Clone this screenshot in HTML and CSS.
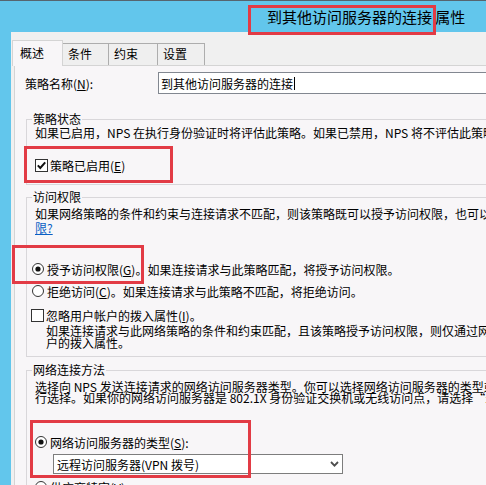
FILE: index.html
```html
<!DOCTYPE html>
<html lang="zh-CN">
<head>
<meta charset="utf-8">
<title>到其他访问服务器的连接 属性</title>
<link rel="stylesheet" href="styles.css">
</head>
<body>
<div class="window">
  <div class="titlebar">到其他访问服务器的连接 属性</div>
  <div class="client">
    <div class="tabs">
      <div class="tab active">概述</div>
      <div class="tab t2">条件</div>
      <div class="tab t3">约束</div>
      <div class="tab t4">设置</div>
    </div>
    <div class="panel">
      <div class="name-row">
        <span class="name-label">策略名称(<u>N</u>):</span>
        <div class="textbox">到其他访问服务器的连接<span class="caret"></span></div>
      </div>

      <fieldset class="group g1">
        <legend>策略状态</legend>
        <div class="desc">如果已启用，NPS 在执行身份验证时将评估此策略。如果已禁用，NPS 将不评估此策略。</div>
        <div class="opt opt-g1">
          <svg class="box" width="13" height="13" viewBox="0 0 13 13"><rect x="0.5" y="0.5" width="12" height="12" fill="#fff" stroke="#333"/><path d="M2.8 6.4 L5.3 9 L10.2 3.4" fill="none" stroke="#111" stroke-width="2"/></svg>
          <span>策略已启用(<u>E</u>)</span>
        </div>
      </fieldset>

      <fieldset class="group g2">
        <legend>访问权限</legend>
        <div class="desc d-first">如果网络策略的条件和约束与连接请求不匹配，则该策略既可以授予访问权限，也可以拒绝访问权限。授予或拒绝访问权</div>
        <div class="desc"><span class="link">限?</span></div>
        <div class="opt opt-radio r1">
          <svg class="radio" width="12" height="12" viewBox="0 0 12 12"><circle cx="6" cy="6" r="5.5" fill="#fff" stroke="#333"/><circle cx="6" cy="6" r="2.6" fill="#111"/></svg>
          <span>授予访问权限(<u>G</u>)。如果连接请求与此策略匹配，将授予访问权限。</span>
        </div>
        <div class="opt opt-radio r2">
          <svg class="radio" width="12" height="12" viewBox="0 0 12 12"><circle cx="6" cy="6" r="5.5" fill="#fff" stroke="#333"/></svg>
          <span>拒绝访问(<u>C</u>)。如果连接请求与此策略不匹配，将拒绝访问。</span>
        </div>
        <div class="opt opt-check c3">
          <svg class="box" width="13" height="13" viewBox="0 0 13 13"><rect x="0.5" y="0.5" width="12" height="12" fill="#fff" stroke="#333"/></svg>
          <span>忽略用户帐户的拨入属性(<u>I</u>)。</span>
        </div>
        <div class="sub">
          <div>如果连接请求与此网络策略的条件和约束匹配，且该策略授予访问权限，则仅通过网络策略评估授权，而不考虑用</div>
          <div>户的拨入属性。</div>
        </div>
      </fieldset>

      <fieldset class="group g3">
        <legend>网络连接方法</legend>
        <div class="tight">
          <div>选择向 NPS 发送连接请求的网络访问服务器类型。你可以选择网络访问服务器的类型或供应商特定类型进</div>
          <div>行选择。如果你的网络访问服务器是 802.1X 身份验证交换机或无线访问点，请选择“未指定”。</div>
        </div>
        <div class="opt opt-radio3 r3">
          <svg class="radio" width="12" height="12" viewBox="0 0 12 12"><circle cx="6" cy="6" r="5.5" fill="#fff" stroke="#333"/><circle cx="6" cy="6" r="2.6" fill="#111"/></svg>
          <span>网络访问服务器的类型(<u>S</u>):</span>
        </div>
        <div class="select">
          <span>远程访问服务器(VPN 拨号)</span>
          <svg width="9" height="6" viewBox="0 0 9 6"><path d="M1 1 L4.5 4.6 L8 1" fill="none" stroke="#4d4d4d" stroke-width="1.8"/></svg>
        </div>
        <div class="opt opt-radio3 r4">
          <svg class="radio" width="12" height="12" viewBox="0 0 12 12"><circle cx="6" cy="6" r="5.5" fill="#fff" stroke="#333"/></svg>
          <span>供应商特定(<u>V</u>):</span>
        </div>
      </fieldset>
    </div>
  </div>

  <div class="mark mark-title"></div>
  <div class="mark mark-check"></div>
  <div class="mark mark-radio"></div>
  <div class="mark mark-select"></div>
</div>
</body>
</html>
```

FILE: styles.css
```css
* {
  box-sizing: border-box;
}

html,
body {
  margin: 0;
  padding: 0;
}

body {
  background: #62c6ec;
  font-family: "Noto Sans CJK SC", "Noto Sans", sans-serif;
  font-size: 12px;
  color: #000;
}

.window {
  position: relative;
  width: 486px;
  height: 485px;
  overflow: hidden;
  background: #62c6ec;
  border-top: 1px solid #56656f;
}

.titlebar {
  height: 31px;
  line-height: 31px;
  padding-left: 267px;
  font-size: 15px;
  white-space: nowrap;
  color: #000;
}

.client {
  margin-left: 11px;
  height: 453px;
  padding-top: 8px;
  background: #f0f0f0;
}

/* tabs */
.tabs {
  display: flex;
  align-items: flex-end;
  height: 25px;
  padding-left: 1px;
  position: relative;
  z-index: 1;
}

.tab {
  height: 22px;
  line-height: 20px;
  padding-left: 5px;
  margin-left: -1px;
  border: 1px solid #adadad;
  border-bottom: none;
  background: #efefef;
  white-space: nowrap;
}

.tab.active {
  width: 51px;
  height: 26px;
  line-height: 24px;
  margin-left: 0;
  margin-bottom: -1px;
  padding-left: 7px;
  border-color: #d4d4d4;
  background: #f8f6f8;
  position: relative;
  z-index: 2;
}

.t2 { width: 47px; }
.t3 { width: 50px; }
.t4 { width: 48px; }

/* panel */
.panel {
  margin-left: 3px;
  width: 560px;
  height: 430px;
  padding-top: 6px;
  border: 1px solid #d4d4d4;
  background: #f8f6f8;
}

.name-row {
  display: flex;
  align-items: center;
  height: 22px;
}

.name-label {
  width: 143px;
  padding-left: 10px;
  white-space: nowrap;
}

.textbox {
  display: flex;
  align-items: center;
  width: 400px;
  height: 22px;
  padding-left: 2px;
  border: 1px solid #828790;
  background: #fff;
  white-space: nowrap;
}

.caret {
  display: inline-block;
  width: 1px;
  height: 13px;
  margin-left: 1px;
  background: #000;
}

/* group boxes */
.group {
  margin: 0 0 0 11px;
  padding: 0;
  width: 540px;
  min-width: 0;
  border: 1px solid #d9d7da;
}

.group legend {
  margin-left: 5px;
  padding: 0 1px;
  line-height: 14px;
  font-size: 12px;
  white-space: nowrap;
}

.g1 {
  margin-top: 18px;
  padding-bottom: 12px;
}

.g2 {
  margin-top: 5px;
  padding-bottom: 7px;
}

.g3 {
  margin-top: 6px;
  padding-bottom: 10px;
}

.desc {
  padding-left: 8px;
  line-height: 14px;
  white-space: nowrap;
}

.d-first {
  margin-top: 3px;
}

.link {
  color: #0a5fc4;
  text-decoration: underline;
}

.opt {
  display: flex;
  align-items: center;
  height: 14px;
  white-space: nowrap;
}

.opt svg {
  flex: none;
  display: block;
}

.opt-g1 {
  margin-top: 18px;
  padding-left: 8px;
  gap: 2px;
}

.opt-radio {
  padding-left: 5px;
  gap: 3px;
}

.r1 { margin-top: 27px; }
.r2 { margin-top: 8px; }

.opt-check {
  padding-left: 4px;
  gap: 2px;
}

.c3 { margin-top: 10px; }

.sub {
  margin-top: 3px;
  padding-left: 19px;
  line-height: 12px;
  white-space: nowrap;
}

.tight {
  margin-top: 4px;
  padding-left: 8px;
  line-height: 11px;
  white-space: nowrap;
}

.opt-radio3 {
  padding-left: 8px;
  gap: 3px;
}

.r3 { margin-top: 32px; }
.r4 { margin-top: 6px; }

.select {
  display: flex;
  align-items: center;
  justify-content: space-between;
  width: 290px;
  height: 20px;
  margin-top: 5px;
  margin-left: 26px;
  padding: 0 3px 0 3px;
  border: 1px solid #7d7d7d;
  background: #fff;
  white-space: nowrap;
}

.select svg {
  display: block;
  flex: none;
}

/* red annotation boxes (overlays) */
.mark {
  position: absolute;
  border: 3px solid #e23b45;
  pointer-events: none;
  z-index: 5;
}

.mark-title {
  left: 248px;
  top: 4px;
  width: 188px;
  height: 30px;
}

.mark-check {
  left: 24px;
  top: 145px;
  width: 149px;
  height: 37px;
}

.mark-radio {
  left: 12px;
  top: 244px;
  width: 132px;
  height: 39px;
}

.mark-select {
  left: 30px;
  top: 419px;
  width: 221px;
  height: 58px;
}
```
